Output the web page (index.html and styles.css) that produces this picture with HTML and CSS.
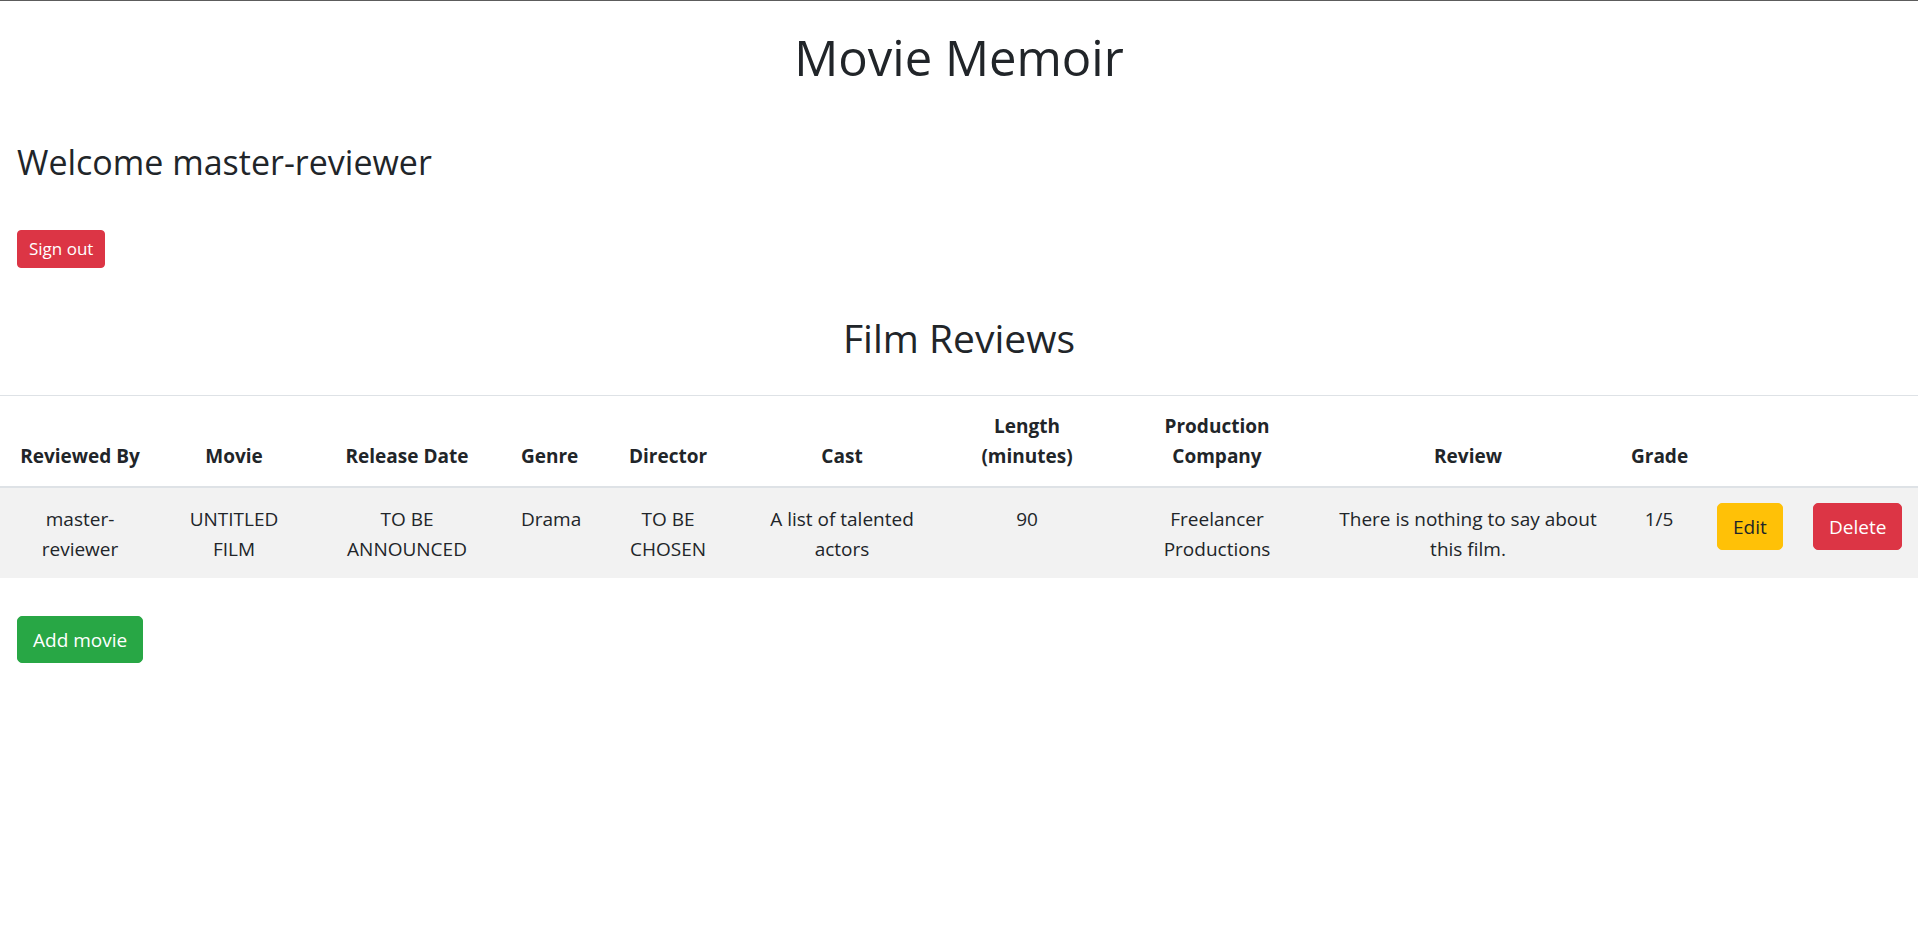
FILE: index.html
```html
<!DOCTYPE html>
<html lang="en">
<head>
<meta charset="utf-8">
<title>Movie Memoir</title>
<link rel="stylesheet" href="styles.css">
</head>
<body>
  <h1 class="page-title">Movie Memoir</h1>
  <section class="user">
    <h3 class="welcome">Welcome master-reviewer</h3>
    <button class="btn btn-sm btn-danger">Sign out</button>
  </section>
  <h2 class="section-title">Film Reviews</h2>
  <table class="reviews">
    <colgroup>
      <col class="c-by"><col class="c-movie"><col class="c-date"><col class="c-genre">
      <col class="c-director"><col class="c-cast"><col class="c-length"><col class="c-company">
      <col class="c-review"><col class="c-grade"><col class="c-edit"><col class="c-delete">
    </colgroup>
    <thead>
      <tr>
        <th>Reviewed By</th>
        <th>Movie</th>
        <th>Release Date</th>
        <th>Genre</th>
        <th>Director</th>
        <th>Cast</th>
        <th>Length (minutes)</th>
        <th>Production Company</th>
        <th>Review</th>
        <th>Grade</th>
        <th></th>
        <th></th>
      </tr>
    </thead>
    <tbody>
      <tr>
        <td>master-reviewer</td>
        <td>UNTITLED FILM</td>
        <td>TO BE ANNOUNCED</td>
        <td>Drama</td>
        <td>TO BE CHOSEN</td>
        <td>A list of talented actors</td>
        <td>90</td>
        <td>Freelancer Productions</td>
        <td>There is nothing to say about this film.</td>
        <td>1/5</td>
        <td class="action"><button class="btn btn-warning">Edit</button></td>
        <td class="action"><button class="btn btn-danger">Delete</button></td>
      </tr>
    </tbody>
  </table>
  <section class="actions">
    <button class="btn btn-success">Add movie</button>
  </section>
</body>
</html>
```

FILE: styles.css
```css
html, body {
  margin: 0;
  padding: 0;
  background: #fff;
}

body {
  border-top: 1px solid #5c5c5c;
  font-family: "Open Sans", "Noto Sans", sans-serif;
  font-size: 19px;
  line-height: 30px;
  color: #212529;
}

.page-title {
  margin: 27px 0 0;
  font-size: 49px;
  line-height: 59px;
  font-weight: 500;
  text-align: center;
}

.user {
  padding: 0 17px;
}

.welcome {
  margin: 55px 0 0;
  font-size: 34px;
  line-height: 41px;
  font-weight: 500;
}

.btn {
  display: inline-block;
  font-family: inherit;
  font-size: 19px;
  line-height: 30px;
  padding: 8px 15px 7px;
  border: 1px solid transparent;
  border-radius: 5px;
  cursor: pointer;
}

.btn-sm {
  font-size: 17px;
  line-height: 26px;
  padding: 5px 11px;
  border-radius: 4px;
}

.user .btn-sm {
  margin-top: 47px;
  display: block;
}

.btn-danger {
  background: #dc3545;
  border-color: #dc3545;
  color: #fff;
}

.btn-warning {
  background: #ffc107;
  border-color: #ffc107;
  color: #212529;
}

.btn-success {
  background: #28a745;
  border-color: #28a745;
  color: #fff;
}

.section-title {
  margin: 46px 0 0;
  font-size: 39px;
  line-height: 47px;
  font-weight: 500;
  text-align: center;
}

.reviews {
  margin-top: 34px;
  width: 100%;
  table-layout: fixed;
  border-collapse: collapse;
}

.c-by { width: 160px; }
.c-movie { width: 148px; }
.c-date { width: 198px; }
.c-genre { width: 86px; }
.c-director { width: 152px; }
.c-cast { width: 196px; }
.c-length { width: 174px; }
.c-company { width: 206px; }
.c-review { width: 296px; }
.c-grade { width: 86px; }
.c-edit { width: 96px; }
.c-delete { width: 120px; }

.reviews th,
.reviews td {
  padding: 15px;
  text-align: center;
  border-top: 1px solid #dee2e6;
}

.reviews th {
  vertical-align: bottom;
  font-weight: 700;
  border-bottom: 2px solid #dee2e6;
}

.reviews td {
  padding: 16px 15px 14px;
  vertical-align: top;
  background: #f2f2f2;
}

.reviews td.action {
  padding-top: 15px;
  padding-bottom: 15px;
  text-align: left;
}

.actions {
  padding: 38px 17px 0;
}
```
